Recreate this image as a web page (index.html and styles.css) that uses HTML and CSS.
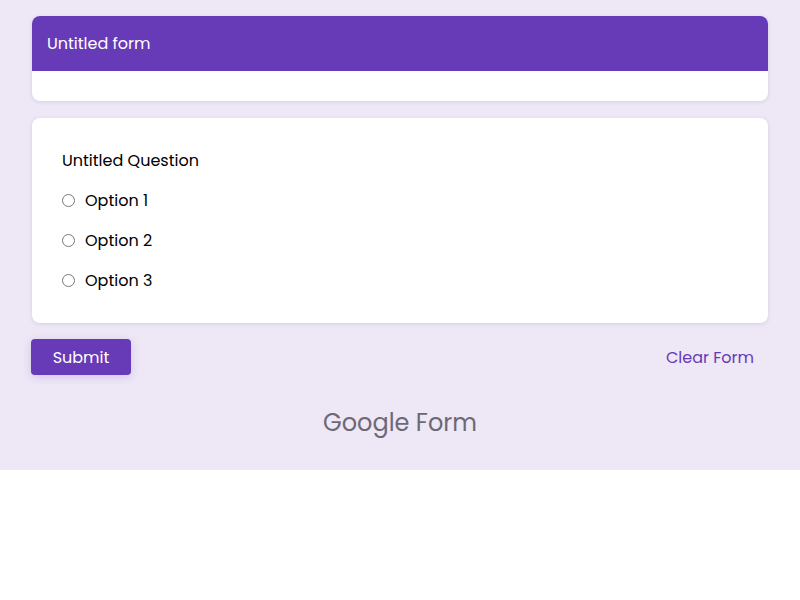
FILE: index.html
```html
<!DOCTYPE html>
<html>
<head>
<meta charset="utf-8">
<link rel="stylesheet" href="styles.css">
</head>
<body>
<div class="page">
  <div class="card header-card">
    <div class="header-bar">Untitled form</div>
    <div class="header-body"></div>
  </div>
  <div class="card question-card">
    <div class="q-title">Untitled Question</div>
    <label class="option"><input type="radio" name="q1"><span>Option 1</span></label>
    <label class="option"><input type="radio" name="q1"><span>Option 2</span></label>
    <label class="option"><input type="radio" name="q1"><span>Option 3</span></label>
  </div>
  <div class="actions">
    <button class="submit">Submit</button>
    <button class="clear">Clear Form</button>
  </div>
  <div class="footer">Google Form</div>
</div>
</body>
</html>
```

FILE: styles.css
```css
html, body {
  margin: 0;
  padding: 0;
  background: #ffffff;
}
body {
  font-family: Poppins, "Open Sans", "DejaVu Sans", sans-serif;
}
.page {
  background: #ede7f6;
  padding: 16px 32px 30px 32px;
  height: 424px;
}
.card {
  background: #ffffff;
  border-radius: 8px;
  box-shadow: 0 1px 4px rgba(60, 40, 100, 0.12);
  overflow: hidden;
}
.header-bar {
  background: #673ab7;
  color: #ffffff;
  height: 55px;
  padding: 0 15px;
  display: flex;
  align-items: center;
  font-size: 16px;
}
.header-body {
  height: 30px;
}
.question-card {
  margin-top: 17px;
  padding: 31px 30px 23px 30px;
}
.q-title {
  font-size: 16px;
  line-height: 24px;
  color: #000000;
  margin-bottom: 7px;
}
.option {
  display: flex;
  align-items: center;
  height: 40px;
  font-size: 16px;
  color: #000000;
}
.option input {
  margin: 0 10px 0 0;
  width: 13px;
  height: 13px;
}
.actions {
  margin-top: 16px;
  display: flex;
  justify-content: space-between;
  align-items: center;
  margin-left: -1px;
}
.submit {
  width: 100px;
  height: 36px;
  background: #673ab7;
  color: #ffffff;
  border: none;
  border-radius: 4px;
  font-family: inherit;
  font-size: 16px;
  box-shadow: 0 2px 8px rgba(103, 58, 183, 0.2);
}
.clear {
  background: none;
  border: none;
  color: #673ab7;
  font-family: inherit;
  font-size: 16px;
  padding: 0 14px;
  height: 36px;
}
.footer {
  margin-top: 30px;
  text-align: center;
  font-size: 24px;
  line-height: 36px;
  color: #6d6875;
}
```
